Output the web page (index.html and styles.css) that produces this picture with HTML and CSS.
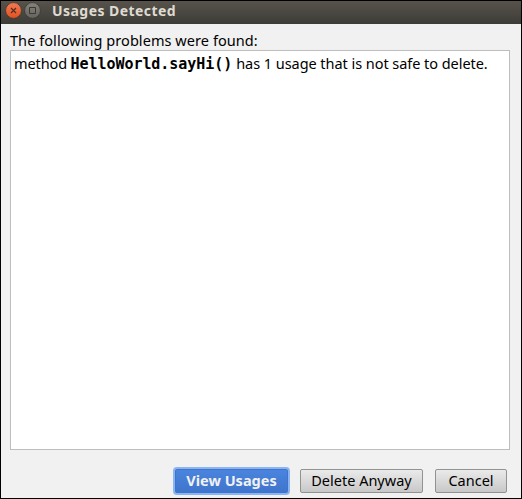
FILE: index.html
```html
<!DOCTYPE html>
<html lang="en">
<head>
<meta charset="utf-8">
<title>Usages Detected</title>
<link rel="stylesheet" href="styles.css">
</head>
<body>
<div class="dialog">
  <header class="titlebar">
    <svg class="control" viewBox="0 0 17 17" aria-label="Close">
      <defs><linearGradient id="close" x2="0" y2="1"><stop stop-color="#f37b56"/><stop offset="1" stop-color="#e2501f"/></linearGradient></defs>
      <circle cx="8.5" cy="8.5" r="7.9" fill="url(#close)" stroke="#38352f" stroke-width=".7"/>
      <path d="M6 6l5 5M11 6l-5 5" stroke="#51301f" stroke-width="1.2"/>
    </svg>
    <svg class="control" viewBox="0 0 17 17" aria-label="Maximize">
      <defs><linearGradient id="max" x2="0" y2="1"><stop stop-color="#85827b"/><stop offset="1" stop-color="#65635d"/></linearGradient></defs>
      <circle cx="8.5" cy="8.5" r="7.9" fill="url(#max)" stroke="#35332e" stroke-width=".7"/>
      <path d="M5.5 5.5h6v6h-6z" fill="none" stroke="#3b3934"/>
    </svg>
    <h1 class="title"><span>Usages Detected</span></h1>
  </header>
  <main class="content">
    <p class="caption"><span>The following problems were found:</span></p>
    <div class="problems">
      <p class="problem"><span class="lead">method</span> <code>HelloWorld.sayHi()</code> <span class="detail">has 1 usage that is not safe to delete.</span></p>
    </div>
    <footer class="actions">
      <button class="button primary"><span>View Usages</span></button>
      <button class="button delete"><span>Delete Anyway</span></button>
      <button class="button cancel"><span>Cancel</span></button>
    </footer>
  </main>
</div>
</body>
</html>
```
FILE: styles.css
```css
* { box-sizing: border-box; }
body {
  margin: 0;
  font: 15px/20px "Noto Sans", sans-serif;
  color: #000;
}
.dialog {
  display: flex;
  flex-direction: column;
  width: 522px;
  height: 499px;
  border: 1px solid #000;
  background: #f1f1f1;
}
.titlebar {
  display: flex;
  flex: none;
  gap: 2px;
  height: 23px;
  padding: 1px 0 0 4px;
  background: linear-gradient(#57534b, #3d3c37);
}
.control { width: 17px; height: 17px; }
.title {
  margin: 0 0 0 9px;
  font-size: 14px;
  line-height: 18px;
  font-weight: 700;
  letter-spacing: 0.45px;
  color: #dfdbd2;
}
.content {
  display: flex;
  flex: 1;
  flex-direction: column;
  padding: 7px 11px 3px 9px;
}
.caption {
  margin: 0;
  height: 19px;
  line-height: 19px;
  white-space: nowrap;
  font-size: 14.5px;
  letter-spacing: 0.06px;
}
.problems {
  height: 400px;
  padding: 3px;
  border: 1px solid #bdbdbd;
  background: #fff;
}
.problem {
  display: flex;
  align-items: baseline;
  margin: 0;
  white-space: nowrap;
  font-size: 14.5px;
  line-height: 19px;
}
.lead { letter-spacing: -0.1px; }
.detail { letter-spacing: -0.05px; }
.problem code {
  margin: 0 4px 0 3.5px;
  font: 700 15px/17px "DejaVu Sans Mono", monospace;
  letter-spacing: -0.05px;
}
.actions {
  display: flex;
  justify-content: flex-end;
  align-items: center;
  margin-top: 17px;
  padding-right: 3px;
  height: 28px;
}
.button {
  height: 24px;
  padding: 0 0 2px;
  border: 1px solid #909490;
  border-radius: 2px;
  background: linear-gradient(#eaeaea, #c8c8c8);
  font: 14.5px/20px "Noto Sans", sans-serif;
  color: #000;
  white-space: nowrap;
}
.primary {
  width: 117px;
  height: 28px;
  margin-right: 10px;
  border: 2px solid #8bb5f0;
  border-radius: 4px;
  background: linear-gradient(#4a85df, #3f74cb);
  box-shadow: inset 0 0 0 1px #3e74ce;
  font-weight: 700;
  color: #f1f1f1;
}
.delete { width: 123px; margin-right: 12px; }
.cancel { width: 72px; }
```
